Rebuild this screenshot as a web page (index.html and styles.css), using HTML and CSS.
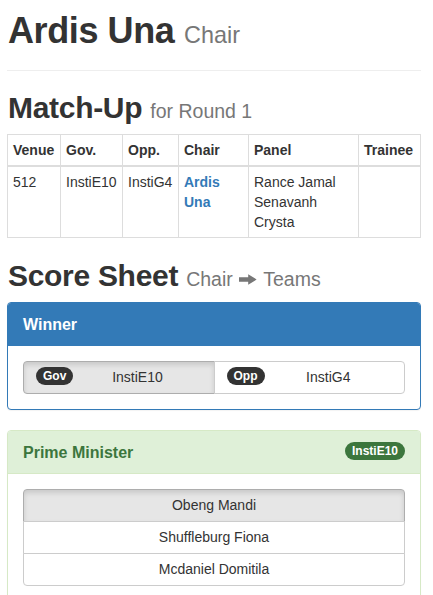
FILE: index.html
```html
<!DOCTYPE html>
<html lang="en">
<head>
<meta charset="utf-8">
<title>Ardis Una - Chair</title>
<link rel="stylesheet" href="styles.css">
</head>
<body>
<div class="container">
  <div class="page-header">
    <h1>Ardis Una <small>Chair</small></h1>
  </div>

  <h2>Match-Up <small>for Round 1</small></h2>
  <table class="matchup">
    <thead>
      <tr>
        <th class="c-venue">Venue</th>
        <th class="c-gov">Gov.</th>
        <th class="c-opp">Opp.</th>
        <th class="c-chair">Chair</th>
        <th class="c-panel">Panel</th>
        <th class="c-trainee">Trainee</th>
      </tr>
    </thead>
    <tbody>
      <tr>
        <td>512</td>
        <td>InstiE10</td>
        <td>InstiG4</td>
        <td><a class="adj-link" href="#">Ardis Una</a></td>
        <td><div>Rance Jamal</div><div>Senavanh Crysta</div></td>
        <td></td>
      </tr>
    </tbody>
  </table>

  <h2>Score Sheet <small>Chair <svg class="arrow" width="18" height="11" viewBox="0 0 18 11"><path d="M0 3.3 H9.2 V0.2 L17.6 5.5 L9.2 10.8 V7.7 H0 Z" fill="#777"/></svg> Teams</small></h2>

  <div class="panel panel-primary">
    <div class="panel-heading"><h3 class="panel-title">Winner</h3></div>
    <div class="panel-body">
      <div class="btn-group-justified">
        <button class="btn btn-left active"><span class="badge">Gov</span><span class="btn-text">InstiE10</span></button>
        <button class="btn btn-right"><span class="badge">Opp</span><span class="btn-text">InstiG4</span></button>
      </div>
    </div>
  </div>

  <div class="panel panel-success">
    <div class="panel-heading">
      <span class="badge badge-success">InstiE10</span>
      <h3 class="panel-title">Prime Minister</h3>
    </div>
    <div class="panel-body">
      <div class="btn-group-vertical">
        <button class="vbtn active">Obeng Mandi</button>
        <button class="vbtn">Shuffleburg Fiona</button>
        <button class="vbtn">Mcdaniel Domitila</button>
      </div>
    </div>
  </div>
</div>
</body>
</html>
```

FILE: styles.css
```css
* { box-sizing: border-box; }

html, body {
  margin: 0;
  padding: 0;
  background: #fff;
}

body {
  font-family: "Liberation Sans", Arial, Helvetica, sans-serif;
  font-size: 14px;
  line-height: 20px;
  color: #333;
}

.container {
  padding: 11px 12px 0 7px;
}

h1, h2, h3 {
  font-family: "Liberation Sans", Arial, Helvetica, sans-serif;
  font-weight: 700;
  color: #333;
  margin: 0;
}

h1 small, h2 small {
  font-weight: 400;
  color: #777;
  font-size: 65%;
  line-height: 1;
  letter-spacing: 0;
}

.page-header {
  padding-bottom: 9px;
  margin-bottom: 20px;
  border-bottom: 1px solid #eee;
}

h1 {
  font-size: 36px;
  line-height: 39.6px;
  height: 39.6px;
  margin-bottom: 10px;
  padding-left: 1px;
  letter-spacing: -0.4px;
}

h2 {
  font-size: 30px;
  line-height: 33px;
  height: 33px;
  margin-bottom: 10px;
  padding-left: 1px;
  letter-spacing: -0.3px;
}

.arrow {
  vertical-align: 1px;
  margin: 0 1px;
}

/* Match-up table */
.matchup {
  width: 100%;
  table-layout: fixed;
  border-collapse: collapse;
  margin-bottom: 21px;
  border: 1px solid #ddd;
}

.matchup th,
.matchup td {
  border: 1px solid #ddd;
  padding: 5px 5px;
  text-align: left;
  vertical-align: top;
  line-height: 20px;
}

.matchup th {
  font-weight: 700;
  border-bottom-width: 2px;
  padding-top: 5px;
  padding-bottom: 5px;
}

.c-venue { width: 53px; }
.c-gov { width: 62px; }
.c-opp { width: 56px; }
.c-chair { width: 70px; }
.c-panel { width: 110px; }

.adj-link {
  color: #337ab7;
  font-weight: 700;
  text-decoration: none;
}

/* Panels */
.panel {
  border: 1px solid transparent;
  border-radius: 4px;
  margin-bottom: 20px;
  background: #fff;
  box-shadow: 0 1px 1px rgba(0,0,0,.05);
}

.panel-heading {
  padding: 13px 15px 11px;
  border-bottom: 1px solid transparent;
  border-radius: 3px 3px 0 0;
}

.panel-title {
  font-size: 16px;
  line-height: 18px;
  color: inherit;
}

.panel-body {
  padding: 15px;
}

.panel-primary { border-color: #337ab7; }
.panel-primary > .panel-heading {
  background: #337ab7;
  border-color: #337ab7;
  color: #fff;
}

.panel-success { border-color: #d6e9c6; }
.panel-success > .panel-heading {
  background: #dff0d8;
  border-color: #d6e9c6;
  color: #3c763d;
}

/* Badges */
.badge {
  display: inline-block;
  min-width: 10px;
  padding: 3px 7px 3px;
  font-size: 12px;
  font-weight: 700;
  line-height: 12px;
  color: #fff;
  text-align: center;
  white-space: nowrap;
  background: #333;
  border-radius: 10px;
}

.badge-success {
  float: right;
  background: #3c763d;
  margin-top: -2px;
}

/* Buttons */
.btn-group-justified {
  display: flex;
}

.btn {
  flex: 1 1 0;
  display: flex;
  align-items: center;
  margin: 0;
  padding: 6px 12px;
  font-family: inherit;
  font-size: 14px;
  line-height: 19px;
  color: #333;
  background: #fff;
  border: 1px solid #ccc;
  cursor: pointer;
}

.btn .badge {
  margin-top: -2px;
}

.btn-text {
  flex: 1;
  text-align: center;
}

.btn-left {
  border-radius: 4px 0 0 4px;
}

.btn-right {
  border-radius: 0 4px 4px 0;
  margin-left: -1px;
}

.btn.active,
.vbtn.active {
  background: #e6e6e6;
  border-color: #adadad;
  box-shadow: inset 0 3px 5px rgba(0,0,0,.125);
}

.btn-group-vertical {
  display: flex;
  flex-direction: column;
}

.vbtn {
  display: block;
  width: 100%;
  margin: 0;
  padding: 6px 12px;
  font-family: inherit;
  font-size: 14px;
  line-height: 19px;
  color: #333;
  text-align: center;
  background: #fff;
  border: 1px solid #ccc;
  border-radius: 0;
  cursor: pointer;
}

.vbtn + .vbtn { margin-top: -1px; }
.vbtn:first-child { border-radius: 4px 4px 0 0; }
.vbtn:last-child { border-radius: 0 0 4px 4px; }
```
